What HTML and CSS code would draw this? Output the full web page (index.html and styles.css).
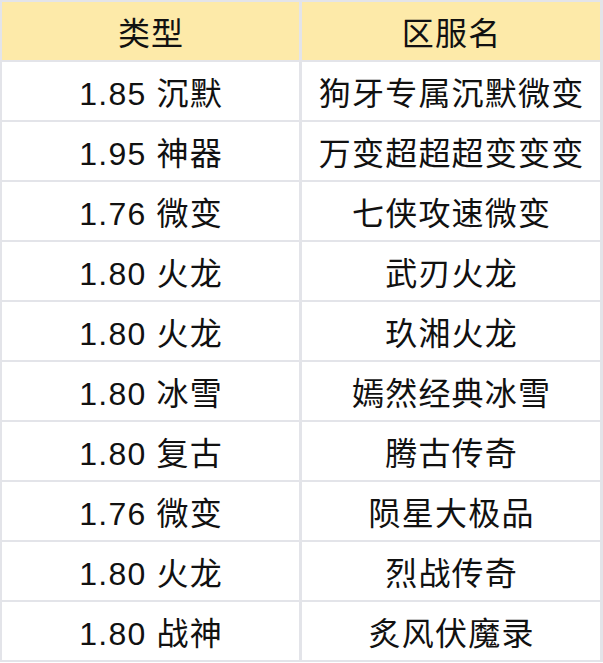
FILE: index.html
```html
<!DOCTYPE html>
<html lang="zh">
<head>
<meta charset="utf-8">
<title>区服</title>
<link rel="stylesheet" href="styles.css">
</head>
<body>
<div class="table">
  <div class="cell head">类型</div><div class="cell head">区服名</div>
  <div class="cell">1.85 沉默</div><div class="cell">狗牙专属沉默微变</div>
  <div class="cell">1.95 神器</div><div class="cell">万变超超超变变变</div>
  <div class="cell">1.76 微变</div><div class="cell">七侠攻速微变</div>
  <div class="cell">1.80 火龙</div><div class="cell">武刃火龙</div>
  <div class="cell">1.80 火龙</div><div class="cell">玖湘火龙</div>
  <div class="cell">1.80 冰雪</div><div class="cell">嫣然经典冰雪</div>
  <div class="cell">1.80 复古</div><div class="cell">腾古传奇</div>
  <div class="cell">1.76 微变</div><div class="cell">陨星大极品</div>
  <div class="cell">1.80 火龙</div><div class="cell">烈战传奇</div>
  <div class="cell">1.80 战神</div><div class="cell">炙风伏魔录</div>
</div>
</body>
</html>
```
FILE: styles.css
```css
html, body {
  margin: 0;
  padding: 0;
  background: #ffffff;
}
.table {
  width: 603px;
  box-sizing: border-box;
  display: grid;
  grid-template-columns: 297px 298px;
  grid-auto-rows: 58px;
  gap: 2px 3px;
  padding: 2px 3px 2px 2px;
  background: #e3e4e9;
}
.cell {
  background: #ffffff;
  display: flex;
  align-items: center;
  justify-content: center;
  font-family: "Liberation Sans", "Noto Sans CJK SC", sans-serif;
  font-size: 32px;
  letter-spacing: 1.2px;
  text-indent: 1.2px;
  color: #111111;
}
.head {
  background: #fdeaa9;
}
```
